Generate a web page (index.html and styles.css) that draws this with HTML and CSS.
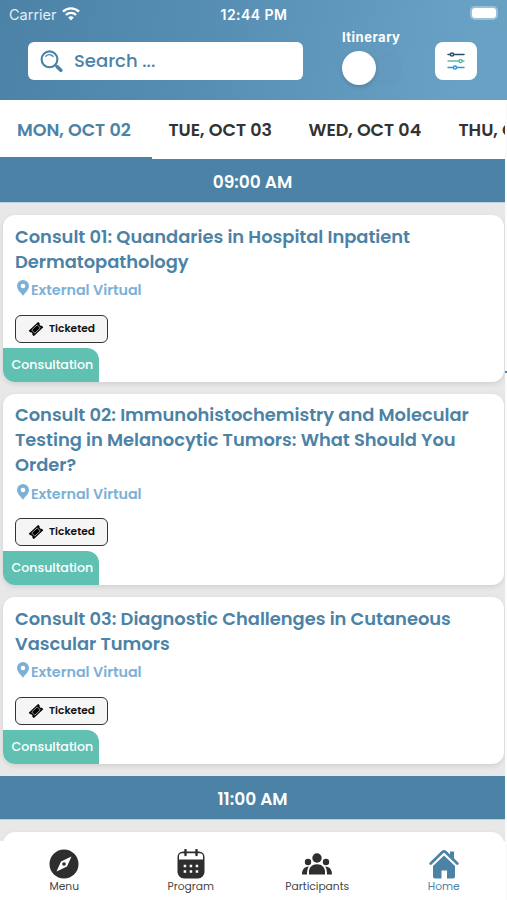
FILE: index.html
```html
<!DOCTYPE html>
<html lang="en">
<head>
<meta charset="UTF-8">
<meta name="viewport" content="width=device-width, initial-scale=1.0">
<title>Program</title>
<link rel="stylesheet" href="styles.css">
</head>
<body>
<svg class="defs" width="0" height="0">
  <symbol id="pin" viewBox="0 0 12 16">
    <path fill-rule="evenodd" d="M6 0a6 6 0 0 0-6 6c0 4 4.500 7 6 10 1.500-3 6-6 6-10a6 6 0 0 0-6-6zm0 3.700a2.300 2.300 0 1 1 0 4.600 2.300 2.300 0 0 1 0-4.600z"/>
  </symbol>
  <symbol id="ticket" viewBox="0 0 16 14">
    <g transform="rotate(-43 8 7)">
      <path d="M1.500 3.300h13v2.200a1.600 1.600 0 0 0 0 3v2.200h-13V8.500a1.600 1.600 0 0 0 0-3z"/>
      <path d="M4.200 4.800h7.600v4.400H4.200z" fill="none" stroke="#f5f5f5" stroke-width=".6"/>
    </g>
  </symbol>
</svg>

<div class="app">
  <header class="header">
    <div class="status">
      <span class="carrier">Carrier
        <svg width="18" height="14" viewBox="0 0 18 14" fill="none" stroke="#fff" stroke-width="2.300">
          <path d="M1 4.700a11.500 11.500 0 0 1 16 0M3.900 8a7.300 7.300 0 0 1 10.200 0"/>
          <path d="M9 13.500 6.200 10.600a4 4 0 0 1 5.600 0z" fill="#fff" stroke="none"/>
        </svg>
      </span>
      <span class="clock">12:44 PM</span>
      <span class="battery"><i></i></span>
    </div>
    <div class="tools">
      <div class="search">
        <svg width="23" height="23" viewBox="0 0 23 23" fill="none" stroke="#4b82a6" stroke-linecap="round">
          <circle cx="9.500" cy="9.300" r="7.900" stroke-width="2.100"/>
          <path d="M5.800 6.200c2-2.300 5.500-2.200 7.300.3" stroke-width="1.300"/>
          <path d="m15.500 15.200 1.500 1.500" stroke-width="2"/>
          <path d="m17.500 17 3.300 3.300" stroke-width="3.600"/>
        </svg>
        <span>Search ...</span>
      </div>
      <div class="itinerary">
        <span>Itinerary</span>
        <div class="switch"><i></i></div>
      </div>
      <div class="filter">
        <svg width="18" height="20" viewBox="0 0 18 20" fill="#fff" stroke-width="1.500" stroke-linecap="round">
          <g stroke="#274d6b"><path d="M1 3.500h16"/><circle cx="5" cy="3.500" r="1.600"/></g>
          <g stroke="#62bb9f"><path d="M1 10h16"/><circle cx="13.500" cy="10" r="1.600"/></g>
          <g stroke="#3293dc"><path d="M1 16.500h16"/><circle cx="8" cy="16.500" r="1.600"/></g>
        </svg>
      </div>
    </div>
  </header>

  <div class="tabs">
    <div class="tab active"><span>MON, OCT 02</span></div>
    <div class="tab"><span>TUE, OCT 03</span></div>
    <div class="tab"><span>WED, OCT 04</span></div>
    <div class="tab"><span>THU, OCT 05</span></div>
  </div>

  <main class="sessions">
    <div class="time">09:00 AM</div>

    <div class="card">
      <h2>Consult 01: Quandaries in Hospital Inpatient<br>Dermatopathology</h2>
      <p class="place"><svg width="12" height="16"><use href="#pin"/></svg><span>External Virtual</span></p>
      <div class="ticketed"><svg width="16" height="14"><use href="#ticket"/></svg><span>Ticketed</span></div>
      <div class="type"><span>Consultation</span></div>
    </div>

    <div class="card">
      <h2>Consult 02: Immunohistochemistry and Molecular<br>Testing in Melanocytic Tumors: What Should You<br>Order?</h2>
      <p class="place"><svg width="12" height="16"><use href="#pin"/></svg><span>External Virtual</span></p>
      <div class="ticketed"><svg width="16" height="14"><use href="#ticket"/></svg><span>Ticketed</span></div>
      <div class="type"><span>Consultation</span></div>
    </div>

    <div class="card">
      <h2>Consult 03: Diagnostic Challenges in Cutaneous<br>Vascular Tumors</h2>
      <p class="place"><svg width="12" height="16"><use href="#pin"/></svg><span>External Virtual</span></p>
      <div class="ticketed"><svg width="16" height="14"><use href="#ticket"/></svg><span>Ticketed</span></div>
      <div class="type"><span>Consultation</span></div>
    </div>

    <div class="time">11:00 AM</div>
    <div class="card"></div>
  </main>

  <nav class="nav">
    <div class="item">
      <svg width="30" height="30" viewBox="0 0 30 30">
        <circle cx="15" cy="15" r="14.500"/>
        <path d="M22.500 7.500 18 17.500 7.500 22.500 12 12.500z" fill="#fff"/>
        <circle cx="15" cy="15" r="1.800"/>
      </svg>
      <span>Menu</span>
    </div>
    <div class="item">
      <svg width="28" height="30" viewBox="0 0 28 30">
        <path fill-rule="evenodd" d="M6 2.500h16a5.500 5.500 0 0 1 5.500 5.500v15a6.500 6.500 0 0 1-6.500 6.500H7A6.500 6.500 0 0 1 .5 23V8A5.500 5.500 0 0 1 6 2.500zM2 7.500V10.500h24V7.500a3.300 3.300 0 0 0-3.300-3.300H5.300A3.300 3.300 0 0 0 2 7.500z"/>
        <path d="M8.500 1v5M19.500 1v5" stroke="#2e2e2e" stroke-width="2.400" stroke-linecap="round"/>
        <path d="M6.700 17h2.500m3.500 0h2.500m3.500 0h2.500M6.700 22.500h2.500m3.500 0h2.500m3.500 0h2.500" stroke="#fff" stroke-width="2.500"/>
      </svg>
      <span>Program</span>
    </div>
    <div class="item">
      <svg class="people" width="30" height="22" viewBox="0 0 30 22">
        <circle cx="15" cy="5" r="4.700"/>
        <circle cx="6" cy="9" r="3.200"/>
        <circle cx="24" cy="9" r="3.200"/>
        <path d="M7 21.500v-3c0-4 3-7.300 8-7.300s8 3.300 8 7.300v3zM0 21.500c0-4.500 1.700-7.700 6.800-8.100-1.300 2-1.800 4.300-1.800 8.100zM30 21.500c0-4.500-1.700-7.700-6.800-8.100 1.300 2 1.800 4.300 1.800 8.100z"/>
      </svg>
      <span>Participants</span>
    </div>
    <div class="item active">
      <svg width="30" height="30" viewBox="0 0 30 30">
        <path d="M1.700 14.500 13.500 3q1.500-1.300 3 0L28.300 14.500" fill="none" stroke="#4b82a6" stroke-width="2.700" stroke-linecap="round"/>
        <path d="M21 2.500h4v8l-4-4z"/>
        <path d="M15 6.500 26 17v10.500a2 2 0 0 1-2 2h-6V21.500h-5.500v8H6a2 2 0 0 1-2-2V17z"/>
      </svg>
      <span>Home</span>
    </div>
  </nav>
</div>
<i class="next-page"></i>
</body>
</html>
```
FILE: styles.css
```css
* {
  box-sizing: border-box;
}
body {
  margin: 0;
  background-color: #fbfbfb;
  font-family: Poppins, Inter, "Open Sans", sans-serif;
  height: 900px;
  overflow: hidden;
  position: relative;
}
.defs {
  position: absolute;
}
svg {
  display: block;
  flex-shrink: 0;
}
.app {
  width: 505px;
  height: 900px;
  display: flex;
  flex-direction: column;
}
.header {
  width: 507px;
  height: 100px;
  flex-shrink: 0;
  background: linear-gradient(100deg, #4b82a6 0%, #568eb3 40%, #68a1c4 90%);
  color: #fff;
}
.status {
  height: 28px;
  padding: 0 7px 0 9px;
  display: grid;
  grid-template-columns: 1fr auto 1fr;
  align-items: center;
  font-family: Inter, sans-serif;
  font-size: 14.500px;
}
.carrier {
  display: flex;
  align-items: center;
  gap: 5px;
  color: #e4eef5;
}
.clock {
  font-weight: 600;
  font-size: 14px;
  letter-spacing: 0.450px;
  margin-left: -1px;
}
.battery {
  justify-self: end;
  width: 28px;
  height: 14px;
  padding: 2px;
  margin-right: 2px;
  margin-top: -2px;
  border-radius: 5px;
  background-color: #9bc1d8;
}
.battery i {
  display: block;
  width: 24px;
  height: 10px;
  border-radius: 3px;
  background-color: #fff;
}
.tools {
  display: flex;
  align-items: flex-start;
  padding: 0 30px 0 28px;
}
.search {
  width: 275px;
  height: 38px;
  margin-top: 14px;
  padding-left: 12px;
  display: flex;
  align-items: center;
  gap: 11px;
  border-radius: 6px;
  background-color: #fff;
  color: #4b82a6;
  font-size: 18px;
  font-weight: 500;
}
.search span {
  margin-top: -1px;
}
.itinerary {
  width: 62px;
  margin-left: 39px;
  font-family: Inter, sans-serif;
  font-size: 13px;
  line-height: 18px;
  font-weight: 700;
  letter-spacing: 0.500px;
}
.itinerary span {
  white-space: nowrap;
}
.switch {
  width: 60px;
  height: 35px;
  margin-top: 5px;
  border-radius: 18px;
  background-color: #6399bc;
}
.switch i {
  display: block;
  width: 34px;
  height: 34px;
  border-radius: 50%;
  background-color: #fff;
  box-shadow: 0 2px 4px rgba(0, 0, 0, 0.150);
}
.filter {
  width: 42px;
  height: 38px;
  margin-top: 14px;
  margin-left: auto;
  display: flex;
  align-items: center;
  justify-content: center;
  border-radius: 8px;
  background-color: #fff;
}

.tabs {
  height: 59px;
  flex-shrink: 0;
  display: flex;
  background-color: #fff;
  color: #333;
  font-size: 17.500px;
  font-weight: 600;
  white-space: nowrap;
  overflow: hidden;
}
.tab {
  flex-shrink: 0;
  width: 150px;
  padding-left: 17px;
  line-height: 60px;
}
.tab.active {
  width: 151.500px;
  color: #4b82a6;
  box-shadow: inset 0 -2px #4b82a6;
}
.tab:nth-child(2) {
  width: 140px;
}

.sessions {
  height: 682px;
  flex-shrink: 0;
  overflow: hidden;
  background-color: #e8e8e8;
}
.time {
  height: 44px;
  line-height: 46px;
  margin-bottom: 12px;
  text-align: center;
  background-color: #4b82a6;
  border-bottom: 1px solid #b9d3e2;
  color: #fff;
  font-size: 17px;
  font-weight: 600;
}
.card {
  margin: 0 1px 12px 3px;
  min-height: 40px;
  padding: 8.500px 12px 0;
  border-radius: 12px;
  background-color: #fff;
  box-shadow: 0 2px 5px rgba(0, 0, 0, 0.100);
  overflow: hidden;
}
.card h2 {
  margin: 0;
  font-size: 17.900px;
  line-height: 25px;
  font-weight: 600;
  color: #4b82a6;
  letter-spacing: -0.030px;
  white-space: nowrap;
}
.place {
  display: flex;
  align-items: center;
  gap: 2px;
  height: 22px;
  margin: 5px 0 14px 2px;
  color: #7cb0d7;
  fill: #7cb0d7;
  font-size: 14.300px;
  font-weight: 600;
}
.place span {
  margin-top: 2px;
}
.place svg {
  margin-top: -3px;
}
.ticketed {
  display: flex;
  align-items: center;
  gap: 5px;
  width: 93px;
  height: 28px;
  padding-left: 12px;
  border: 1.500px solid #333;
  border-radius: 6px;
  background-color: #f5f5f5;
  color: #111;
  font-size: 10.600px;
  font-weight: 600;
}
.type {
  width: 96px;
  height: 34px;
  margin: 5px 0 0 -12px;
  padding-left: 8.500px;
  line-height: 34px;
  border-radius: 0 12px 0 0;
  background-color: #60c0b2;
  color: #fff;
  font-size: 12.600px;
  font-weight: 500;
}

.nav {
  height: 59px;
  flex-shrink: 0;
  display: grid;
  grid-template-columns: repeat(4, 126.500px);
  padding-left: 1px;
  background-color: #fff;
  color: #444;
  fill: #2e2e2e;
  font-size: 10.700px;
}
.item {
  display: flex;
  flex-direction: column;
  align-items: center;
  padding-top: 8px;
  line-height: 16px;
}
.people {
  margin: 4px 0;
}
.item.active {
  color: #4b82a6;
  fill: #4b82a6;
}
.next-page {
  position: absolute;
  left: 505px;
  top: 371px;
  width: 2px;
  height: 2px;
  background-color: #4b82a6;
}
```
